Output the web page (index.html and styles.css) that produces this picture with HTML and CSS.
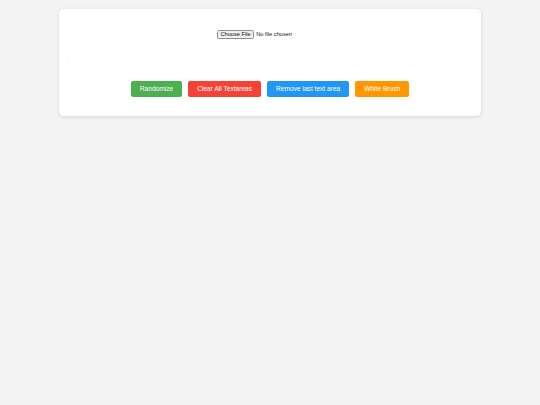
FILE: index.html
```html
<!DOCTYPE html>
<html>
<head>
<meta charset="utf-8">
<link rel="stylesheet" href="styles.css">
</head>
<body>
<div class="card">
  <div class="upload">
    <input type="file" class="file-input">
  </div>
  <div class="preview"><span class="dot"></span></div>
  <div class="controls">
    <button class="btn btn-green">Randomize</button>
    <button class="btn btn-red">Clear All Textareas</button>
    <button class="btn btn-blue">Remove last text area</button>
    <button class="btn btn-orange">White Brush</button>
  </div>
</div>
</body>
</html>
```
FILE: styles.css
```css
html, body {
  margin: 0;
  padding: 0;
}
body {
  background: #f4f4f4;
  font-family: "Liberation Sans", Arial, sans-serif;
  width: 540px;
  height: 405px;
}
.card {
  box-sizing: border-box;
  width: 422px;
  height: 107px;
  margin: 9px auto 0;
  background: #fff;
  border-radius: 5px;
  box-shadow: 0 1px 4px rgba(0, 0, 0, 0.12);
  padding: 21px 8px 0;
}
.upload {
  display: flex;
  justify-content: center;
  height: 9px;
}
.file-input {
  box-sizing: border-box;
  width: 106px;
  height: 9px;
  font-family: "Liberation Sans", Arial, sans-serif;
  font-size: 5.7px;
  line-height: 9px;
  margin: 0;
  padding: 0;
  color: #222;
}
.file-input::file-selector-button {
  box-sizing: border-box;
  height: 9px;
  font-family: "Liberation Sans", Arial, sans-serif;
  font-size: 5.7px;
  line-height: 7px;
  padding: 0 2.4px;
  margin: 0 2px 0 0;
  border: 0.6px solid #8f8f8f;
  border-radius: 1.5px;
  background: #efefef;
  color: #111;
}
.preview {
  height: 1px;
  margin-top: 20px;
}
.dot {
  display: block;
  width: 1px;
  height: 1px;
  background: #e6e6e6;
}
.controls {
  display: flex;
  justify-content: center;
  gap: 6px;
  margin-top: 21px;
}
.btn {
  height: 16px;
  padding: 0 9px;
  border: none;
  border-radius: 2px;
  color: #fff;
  font-family: "Liberation Sans", Arial, sans-serif;
  font-size: 6.6px;
  line-height: 16px;
  cursor: pointer;
}
.btn-green { background: #4caf50; }
.btn-red { background: #f44336; }
.btn-blue { background: #2196f3; }
.btn-orange { background: #ff9800; }
```
